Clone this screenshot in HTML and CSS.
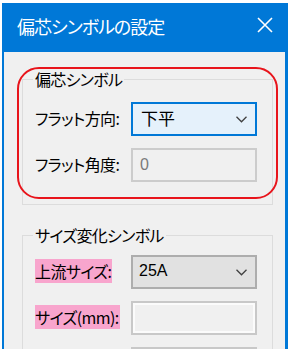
FILE: index.html
```html
<!DOCTYPE html>
<html lang="ja">
<head>
<meta charset="utf-8">
<link rel="stylesheet" href="styles.css">
</head>
<body>
<div class="window">
  <div class="titlebar">
    <span class="title">偏芯シンボルの設定</span>
    <svg class="close" width="16" height="16" viewBox="0 0 16 16"><path d="M1 1 L15 15 M15 1 L1 15" stroke="#fff" stroke-width="1.6" fill="none"/></svg>
  </div>
  <div class="content">
    <div class="annot"></div>
    <fieldset class="group g1">
      <legend>偏芯シンボル</legend>
      <div class="row">
        <span class="label">フラット方向:</span>
        <div class="combo focused"><span class="val">下平</span><svg class="chev" width="11" height="7" viewBox="0 0 11 7"><path d="M0.5 0.8 L5.5 5.8 L10.5 0.8" stroke="#404040" stroke-width="1.3" fill="none"/></svg></div>
      </div>
      <div class="row">
        <span class="label">フラット角度:</span>
        <div class="textbox disabled">0</div>
      </div>
    </fieldset>
    <fieldset class="group g2">
      <legend>サイズ変化シンボル</legend>
      <div class="row">
        <span class="label"><span class="hl">上流サイズ:</span></span>
        <div class="combo gray"><span class="val mono">25A</span><svg class="chev" width="11" height="7" viewBox="0 0 11 7"><path d="M0.5 0.8 L5.5 5.8 L10.5 0.8" stroke="#404040" stroke-width="1.3" fill="none"/></svg></div>
      </div>
      <div class="row">
        <span class="label"><span class="hl">サイズ(mm):</span></span>
        <div class="textbox plain"></div>
      </div>
      <div class="row">
        <span class="label"></span>
        <div class="textbox plain"></div>
      </div>
    </fieldset>
  </div>
</div>
</body>
</html>
```

FILE: styles.css
```css
html, body {
  margin: 0;
  padding: 0;
  background: #fff;
  overflow: hidden;
}
body {
  font-family: "Noto Sans CJK JP", "Noto Sans", sans-serif;
  font-feature-settings: "palt";
  color: #000;
}
.window {
  margin: 3px 0 0 2px;
  width: 286px;
  height: 346px;
  box-sizing: border-box;
  border-left: 2px solid #0078d7;
  border-right: 3px solid #0078d7;
  display: flex;
  flex-direction: column;
  overflow: hidden;
}
.titlebar {
  height: 49px;
  flex: none;
  background: #0078d7;
  display: flex;
  align-items: center;
  justify-content: space-between;
  padding: 0 12px 0 13px;
}
.title {
  color: #fff;
  font-size: 18px;
  line-height: 22px;
  letter-spacing: -1px;
  margin-top: -3px;
}
.close {
  display: block;
  margin-top: -5px;
}
.content {
  flex: 1;
  background: #f0f0f0;
  padding: 0 12px 0 18px;
  position: relative;
}
.annot {
  position: absolute;
  left: 13px;
  top: 15px;
  width: 261px;
  height: 132px;
  box-sizing: border-box;
  border: 2px solid #e8141b;
  border-radius: 22px;
  pointer-events: none;
}
.group {
  margin: 0;
  border: 1px solid #dcdcdc;
  padding: 13px 15px 22px 12px;
  display: flex;
  flex-direction: column;
  gap: 12px;
  min-width: 0;
}
.g1 { margin-top: 18px; }
.g2 { margin-top: 21px; padding-top: 10px; }
.group legend {
  font-size: 16px;
  line-height: 19px;
  letter-spacing: -0.7px;
  padding: 0 2px;
  margin-left: -2px;
}
.row {
  display: flex;
  align-items: center;
  height: 34px;
}
.label {
  width: 96px;
  flex: none;
  font-size: 16px;
  line-height: 20px;
  letter-spacing: -0.6px;
  margin-bottom: 3px;
  white-space: nowrap;
}
.hl {
  background: #f8a5cd;
  padding-right: 1px;
}
.combo, .textbox {
  width: 126px;
  height: 34px;
  box-sizing: border-box;
  flex: none;
  display: flex;
  align-items: center;
}
.combo {
  justify-content: space-between;
  padding: 0 8px 0 8px;
}
.combo.focused {
  border: 2px solid #0078d7;
  background: #e5f1fb;
}
.combo.gray {
  border: 2px solid #adadad;
  background: #e1e1e1;
  padding-left: 6px;
}
.val {
  font-size: 17px;
  line-height: 20px;
  margin-bottom: 2px;
}
.mono {
  font-family: "Liberation Sans", sans-serif;
  font-size: 16px;
}
.chev {
  display: block;
}
.textbox {
  padding-left: 7px;
  font-family: "Liberation Sans", sans-serif;
  font-size: 16px;
}
.textbox.disabled {
  border: 2px solid #cccccc;
  background: #f0f0f0;
  color: #7a7a7a;
}
.textbox.plain {
  border: 2px solid #c8c8c8;
  box-shadow: inset 0 0 0 2px #fbfbfb;
  background: #f0f0f0;
}
```
